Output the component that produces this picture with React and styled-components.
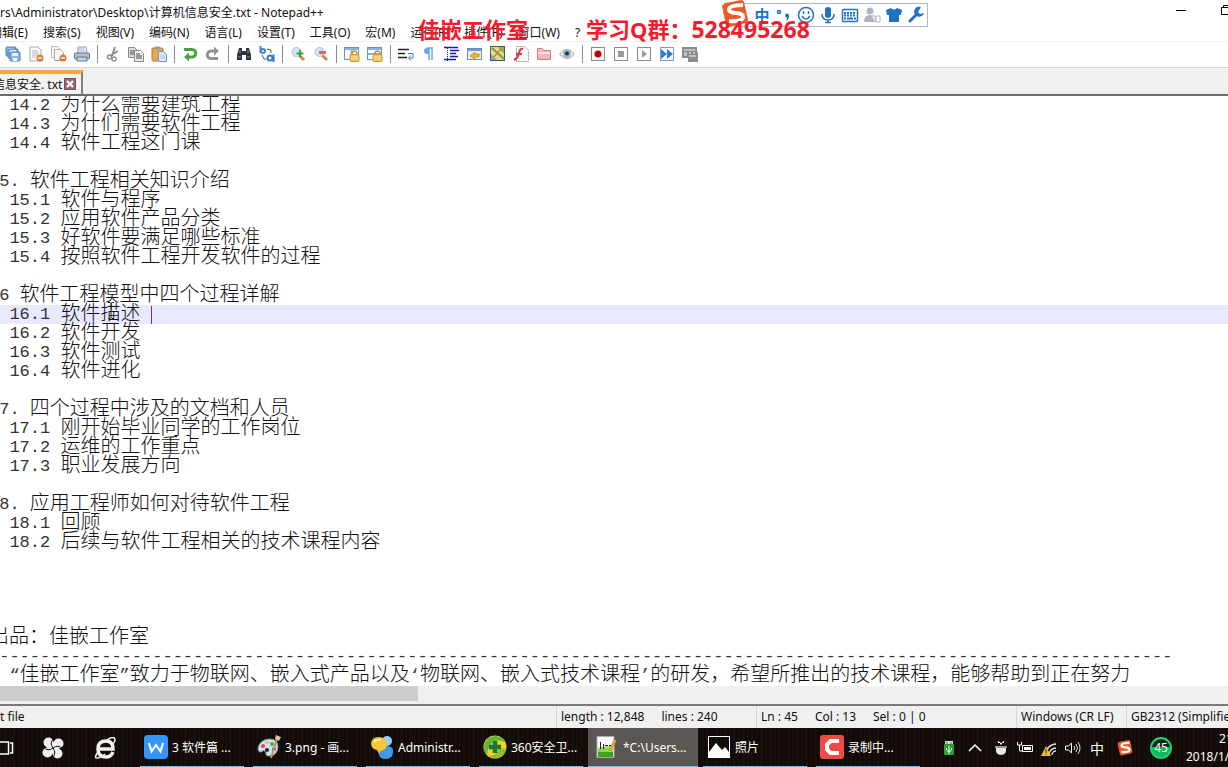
import React from "react";
import styled, { createGlobalStyle } from "styled-components";

const GlobalStyle = createGlobalStyle`
    * {
        box-sizing: border-box;
    }
    body {
        margin: 0;
        overflow: hidden;
        font-family: "Noto Sans", "Noto Sans CJK SC", sans-serif;
        font-size: 12px;
        color: #111;
    }
    button {
        font: inherit;
        color: inherit;
        background: none;
        border: 0;
        padding: 0;
        margin: 0;
    }
`

const Desktop = styled.div`
    position: relative;
    display: flex;
    flex-direction: column;
    height: 100vh;
    overflow: hidden;
    background-color: #fff;
`
const TitleBar = styled.header`
    display: flex;
    justify-content: space-between;
    align-items: center;
    height: 24px;
    white-space: nowrap;
`
const Title = styled.h1`
    margin: 0;
    font-size: 12px;
    font-weight: 400;
`
const WindowButtons = styled.div`
    display: flex;
    align-items: center;
    gap: 35px;
    overflow: hidden;
    height: 20px;
    margin-bottom: 4px;

    svg {
        display: block;
    }
`
const MenuBar = styled.nav`
    display: flex;
    align-items: center;
    gap: 15px;
    height: 18px;
    margin-left: -10px;
    border-bottom: 1px solid #f0f0f0;
    white-space: nowrap;
`
const MenuItem = styled.button`
    line-height: 16px;
`
const Toolbar = styled.div`
    display: flex;
    align-items: center;
    gap: 7px;
    height: 26px;
    padding: 0 5px 2px;
    border-bottom: 1px solid #d9d9d9;
`
const ToolButton = styled.button`
    width: 16px;
    height: 16px;

    svg {
        display: block;
    }
`
const Separator = styled.span`
    width: 1px;
    height: 18px;
    background-color: #8c8c8c;
`
const TabStrip = styled.div`
    display: flex;
    align-items: flex-end;
    height: 28px;
    background-color: #f0f0f0;
    border-bottom: 2px solid #6b6b6b;
`
const Tab = styled.div`
    display: flex;
    align-items: center;
    gap: 2px;
    height: 24px;
    margin-left: -7px;
    padding-right: 5px;
    border-top: 4px solid #f9a73e;
    border-right: 2px solid #808080;
    background-color: #f3f3f3;
    white-space: nowrap;
`
const CloseTab = styled.button`
    width: 12px;
    height: 12px;

    svg {
        display: block;
    }
`
const Editor = styled.main`
    flex: 1;
    overflow: hidden;
    font-family: "Liberation Mono", "Noto Sans CJK SC", monospace;
    font-size: 20px;
    font-weight: 300;
`
const Line = styled.div`
    display: flex;
    align-items: center;
    height: 19px;
    line-height: 19px;
    white-space: pre;
    background-color: ${(props) => (props.$current ? "#e8e8ff" : "transparent")};

    &::before {
        content: "";
        flex: none;
        margin-left: -11px;
    }
`
const Latin = styled.span`
    font-size: 17px;
    color: #333;
`
const Caret = styled.span`
    width: 1px;
    height: 18px;
    background-color: #8a1aa8;
`
const Scrollbar = styled.div`
    height: 20px;
    padding-bottom: 4px;
    background-color: #f0f0f0;
    border-bottom: 2px solid #7a7a7a;
`
const Thumb = styled.div`
    width: 34%;
    height: 15px;
    background-color: #cdcdcd;
`
const StatusBar = styled.footer`
    display: flex;
    height: 22px;
    line-height: 22px;
    background-color: #f0f0f0;
    white-space: nowrap;
`
const StatusCell = styled.div`
    display: flex;
    flex: ${(props) => (props.$width ? "none" : 1)};
    gap: 17px;
    width: ${(props) => (props.$width ? props.$width + "px" : "auto")};
    padding-left: ${(props) => (props.$width ? 4 : 0)}px;
    border-left: ${(props) => (props.$width ? "1px solid #d7d7d7" : "0")};
    overflow: hidden;
`
const Taskbar = styled.div`
    display: flex;
    height: 39px;
    color: #fff;
    background-color: #130c08;
    background-image: repeating-linear-gradient(90deg, #1b120c 0, #0f0906 3px, #1a110c 5px, #0d0705 9px);
    white-space: nowrap;
`
const Launcher = styled.button`
    display: flex;
    align-items: center;
    justify-content: ${(props) => (props.$first ? "flex-start" : "center")};
    width: ${(props) => (props.$first ? 27 : 52)}px;
`
const Tasks = styled.div`
    display: flex;
    gap: 9px;
    margin-left: 9px;
`
const Task = styled.button`
    display: flex;
    align-items: center;
    gap: 4px;
    width: ${(props) => (props.$active ? 110 : 104)}px;
    margin: ${(props) => (props.$active ? "0 -4px" : "0")};
    padding-left: ${(props) => (props.$active ? 7 : 4)}px;
    border-bottom: 1px solid #76b9ed;
    background-color: ${(props) => (props.$active ? "#5c5652" : "transparent")};
`
const Tray = styled.div`
    display: flex;
    align-items: center;
    gap: 8px;
    margin-left: auto;

    svg {
        display: block;
    }
`
const InputMode = styled.span`
    width: 16px;
    margin-right: 4px;
    font-size: 14px;
    text-align: center;
`
const Battery = styled.span`
    width: 22px;
    height: 22px;
    margin: 0 6px 0 9px;
    border: 2px solid #1fd070;
    border-radius: 50%;
    background: linear-gradient(#0d2a1a 45%, #12b85c 45%);
    line-height: 18px;
    text-align: center;
`
const Clock = styled.time`
    display: flex;
    flex-direction: column;
    width: 42px;
    line-height: 18px;
    overflow: hidden;

    span:first-child {
        padding-left: 33px;
    }
`
const InputBar = styled.div`
    position: absolute;
    top: 3px;
    left: 735px;
    display: flex;
    align-items: center;
    gap: 4px;
    width: 193px;
    height: 24px;
    padding-left: 17px;
    border: 1px solid #a9b8d0;
    background-color: #fff;
    color: #2272c3;

    svg {
        display: block;
    }
`
const InputLogo = styled.div`
    position: absolute;
    top: 0;
    left: 721px;
`
const InputText = styled.span`
    width: 18px;
    font-size: 15px;
    font-weight: 700;
    line-height: 20px;
    text-align: center;
`
const Watermark = styled.div`
    position: absolute;
    top: 15px;
    left: ${(props) => props.$left}px;
    color: #f8192c;
    font-size: 22px;
    font-weight: 700;
    line-height: 28px;
    white-space: nowrap;
`
const Digits = styled.span`
    font-size: 23px;
`
const Pointer = styled.div`
    position: absolute;
    top: 302px;
    left: 107px;
`

const Icon = ({ size = 16, children }) => (
    <svg width={size} height={size} viewBox={`0 0 ${size} ${size}`} fill="none">{children}</svg>
)

const disk = (x, y) => (
    <g key={x}>
        <rect x={x} y={y} width="10" height="9" rx="1" fill="#8fb8e6" stroke="#4a7db8" />
        <rect x={x + 2} y={y + 1} width="6" height="3" fill="#e6f0fb" />
        <rect x={x + 3} y={y + 6} width="4" height="3" fill="#fff" />
    </g>
)
const sheet = (x, y, color = "#999") => (
    <path key={x} d={`M${x} ${y}h6l3 3v8h-9z`} fill="#f8f8f8" stroke={color} />
)
const minus = <><circle cx="12" cy="12" r="3.5" fill="#e8732c" /><path d="M10 12h4" stroke="#fff" strokeWidth="1.5" /></>
const lock = (
    <>
        <path d="M8 9V7.500a2.500 2.500 0 0 1 5 0V9" stroke="#c9932f" strokeWidth="1.500" />
        <rect x="6" y="8.500" width="9" height="7" rx="1" fill="#f8c152" stroke="#d29935" />
        <path d="M7 11h7M7 13h7" stroke="#ffe3a0" />
    </>
)
const box = <rect x="1.500" y="1.500" width="13" height="13" fill="#fdfdfd" stroke="#8a8a8a" />

const tools = [
    { name: "Save all", art: <>{disk(1, 1)}{disk(3, 3)}{disk(5, 6)}</> },
    { name: "Close", art: <><path d="M2 1h8l3 3v11H2z" fill="#fafafa" stroke="#aaa" /><path d="M4 5h6M4 7h7M4 9h6M4 11h4" stroke="#bbb" />{minus}</> },
    { name: "Close all", art: <>{sheet(0.5, 0.5, "#bbb")}{sheet(3.5, 3.5, "#aaa")}{minus}</> },
    { name: "Print", art: <><path d="M4 7V1h8l1 6" fill="#eef3fa" stroke="#8a9bb5" /><rect x=".5" y="7" width="15" height="6" rx="1" fill="#b5bdc9" stroke="#69727e" /><path d="M3 11h10v4H3z" fill="#b9d5f5" stroke="#69727e" /><path d="M5 3h5M5 5h6" stroke="#9bb9e0" /></> },
    null,
    { name: "Cut", art: <><path d="M10 1L7 10M13 5L5 10" stroke="#8f8f8f" strokeWidth="2" /><circle cx="4.500" cy="11" r="2" stroke="#8f8f8f" strokeWidth="1.500" /><circle cx="9" cy="13" r="2" stroke="#8f8f8f" strokeWidth="1.500" /></> },
    { name: "Copy", art: <><path d="M.5 1.500h6l3 3v7h-9z" fill="#ddd" stroke="#888" /><path d="M2 4h4v5H2z" fill="#999" /><path d="M6.500 4.500h6l3 3v8h-9z" fill="#eee" stroke="#888" /><path d="M8 7h4v2h2v4H8z" fill="#999" /></> },
    { name: "Paste", art: <><rect x="1" y="2" width="11" height="13" rx="1" fill="#e5a84d" stroke="#b8792b" /><rect x="4" y=".5" width="5" height="3" fill="#9a9a9a" /><path d="M7.500 5.500h5l3 3v7h-8z" fill="#dce9fa" stroke="#6e92c6" /><path d="M9 10h5M9 12h5" stroke="#a9c4e8" /></> },
    null,
    { name: "Undo", art: <><path d="M2 3.500h8a3.500 3.500 0 0 1 0 7.500H5" stroke="#4ba046" strokeWidth="3" /><path d="M7 6.500v9L2 11z" fill="#4ba046" /></> },
    { name: "Redo", art: <><path d="M13 12.500H6a3.500 3.500 0 0 1 0-7.500h5" stroke="#929292" strokeWidth="3" /><path d="M9 .5v9L14 5z" fill="#929292" /></> },
    null,
    { name: "Find", art: <><path d="M3 2h3v3h4V2h3l2 7v5h-5V9H6v5H1V9z" fill="#2b3440" /><path d="M2 11h3M11 11h3M4 4v3M12 4v3" stroke="#8c9cae" /></> },
    { name: "Replace", art: <><path d="M1.500 0v7" stroke="#3f86d8" strokeWidth="2" /><circle cx="4" cy="5" r="2" stroke="#3f86d8" strokeWidth="2" /><path d="M8 3l4 1v3M3 9l2 4h2" stroke="#555" /><circle cx="11" cy="12" r="2.500" stroke="#2b78d3" strokeWidth="2" /><path d="M14.500 8.500V16" stroke="#2b78d3" strokeWidth="2" /></> },
    null,
    { name: "Zoom in", art: <><path d="M9 9l5 5" stroke="#c28b54" strokeWidth="3" /><circle cx="6.500" cy="6" r="4.500" fill="#d3e6f6" stroke="#a9c2da" /><path d="M10 4v7M6.500 7.500h7" stroke="#35a335" strokeWidth="2" /></> },
    { name: "Zoom out", art: <><path d="M9 9l5 5" stroke="#c28b54" strokeWidth="3" /><circle cx="6.500" cy="6" r="4.500" fill="#d3e6f6" stroke="#a9c2da" /><path d="M6 6.500h7" stroke="#e2606a" strokeWidth="3" /></> },
    null,
    { name: "Sync vertical", art: <><rect x=".5" y="1.500" width="14" height="12" fill="#fff" stroke="#6a94c8" /><path d="M1 3h13M7.500 3v10" stroke="#8db1de" strokeWidth="2" />{lock}</> },
    { name: "Sync horizontal", art: <><rect x=".5" y="1.500" width="14" height="12" fill="#fff" stroke="#6a94c8" /><path d="M1 3h13M1 8h13" stroke="#8db1de" strokeWidth="2" />{lock}</> },
    null,
    { name: "Word wrap", art: <><path d="M0 3.500h11M0 7.500h7M0 11.500h9" stroke="#222" strokeWidth="1.500" /><path d="M10 7.500h5v4.500h-4M13 9.500L10.500 12l2.500 2.500" stroke="#4c79ae" /></> },
    { name: "Show symbols", art: <><path d="M8 2H6a3 3 0 0 0 0 6h2z" fill="#6aa5e5" /><path d="M8 2v12M11 2v12M6 2h6" stroke="#6aa5e5" strokeWidth="1.500" /></> },
    { name: "Indent guide", art: <><path d="M0 1.500h14M6 4.500h9M6 7.500h6M6 10.500h8M0 13.500h12" stroke="#1a1ab0" strokeWidth="1.500" /><path d="M3.500 2v14" stroke="#222" strokeDasharray="1 1" /></> },
    { name: "User language", art: <><rect x=".5" y="2.500" width="14" height="11" fill="#e7f0fb" stroke="#6a8fbe" /><path d="M1 4h13" stroke="#6f9dd5" strokeWidth="2" /><path d="M3 10l5-4v2h4v3H8v2z" fill="#f0b62f" stroke="#cf9421" /></> },
    { name: "Document map", art: <><rect x=".5" y=".5" width="14" height="14" fill="#e3dc86" stroke="#555" /><path d="M8 1h6v7z" fill="#80b66b" /><path d="M1 14V8l6 6z" fill="#79a8c8" /><path d="M2 2l12 11" stroke="#6f9f5c" strokeWidth="2" /><path d="M12 2Q8 6 3 12" stroke="#d78030" strokeWidth="1.500" /></> },
    { name: "Function list", art: <><path d="M3.500.5h8l4 4v11h-12z" fill="#fbfbfb" stroke="#999" strokeDasharray="2 1" /><path d="M10 3Q7 2 6 7T1 14M3 8h6" stroke="#d33b49" strokeWidth="2" /></> },
    { name: "Folder", art: <><path d="M1.500 13.500v-11h5l1 2h7v9z" fill="#f3b5bb" stroke="#cf7f89" /><path d="M2 7h12" stroke="#fbe0e3" strokeWidth="2" /></> },
    { name: "Monitor", art: <><path d="M.5 8Q8-1 15.500 8 8 17 .5 8z" fill="#f5eee4" stroke="#bd9b77" /><circle cx="8" cy="7.500" r="4" fill="#8fb4dc" /><circle cx="8" cy="7.500" r="2" fill="#1b324f" /></> },
    null,
    { name: "Record", art: <>{box}<circle cx="8" cy="8" r="3.500" fill="#c40000" /></> },
    { name: "Stop", art: <>{box}<rect x="5" y="5" width="6" height="6" fill="#999" /></> },
    { name: "Play", art: <>{box}<path d="M6 4l5 4-5 4z" fill="#999" /></> },
    { name: "Play many", art: <><rect x="1.500" y="1.500" width="13" height="13" fill="#fff" stroke="#7ba1d0" /><path d="M2 3l6 5-6 5zM8 3l6 5-6 5z" fill="#2d7dd6" /></> },
    { name: "Save macro", art: <><path d="M0 1h15v5h1v10H6v-4H0z" fill="#8c8c8c" /><path d="M2 4h11M2 7h3M2 9h3M7 7h2M11 7h2M7 10h7" stroke="#f5f5f5" /></> },
]

const menus = ["编辑(E)", "搜索(S)", "视图(V)", "编码(N)", "语言(L)", "设置(T)", "工具(O)", "宏(M)", "运行(R)", "插件(P)", "窗口(W)", "?"]

const lines = [
    "  14.2 为什么需要建筑工程",
    "  14.3 为什们需要软件工程",
    "  14.4 软件工程这门课",
    "",
    "15. 软件工程相关知识介绍",
    "  15.1 软件与程序",
    "  15.2 应用软件产品分类",
    "  15.3 好软件要满足哪些标准",
    "  15.4 按照软件工程开发软件的过程",
    "",
    "16 软件工程模型中四个过程详解",
    "  16.1 软件描述 ",
    "  16.2 软件开发",
    "  16.3 软件测试",
    "  16.4 软件进化",
    "",
    "17. 四个过程中涉及的文档和人员",
    "  17.1 刚开始毕业同学的工作岗位",
    "  17.2 运维的工作重点",
    "  17.3 职业发展方向",
    "",
    "18. 应用工程师如何对待软件工程",
    "  18.1 回顾",
    "  18.2 后续与软件工程相关的技术课程内容",
    "",
    "",
    "",
    "",
    "出品：佳嵌工作室",
    "-".repeat(116),
    "  “佳嵌工作室”致力于物联网、嵌入式产品以及‘物联网、嵌入式技术课程’的研发，希望所推出的技术课程，能够帮助到正在努力",
]
const currentLine = 11

// half-width runs are set smaller so that two of them fill one full-width cell
const renderRuns = (text) =>
    (text.match(/[ -~‘’“”]+|[^ -~‘’“”]+/g) || []).map((run, i) =>
        /^[ -~‘’“”]/.test(run) ? <Latin key={i}>{run}</Latin> : <span key={i}>{run}</span>
    )

const SogouMark = ({ size }) => (
    <svg width={size} height={size} viewBox="0 0 28 28" fill="none">
        <path d="M3 4q0-1 2-1l15-3q2 0 3 2l4 18q0 2-2 3L8 27q-2 0-3-2L1 6z" fill="#ea5a25" />
        <path d="M22 5Q8 5 8 9.500q0 3 7 3.500t7 4q0 5-14 4" stroke="#fff" strokeWidth="4" />
    </svg>
)

const tasks = [
    {
        label: "3 软件篇 ...",
        art: <><rect width="24" height="24" rx="4" fill="#3296fa" /><path d="M5 8l2.500 8.500L12 10l4.500 6.500L19 8" stroke="#fff" strokeWidth="2" /></>,
    },
    {
        label: "3.png - 画...",
        art: <><path d="M1 14Q2 5 12 4q9 0 9 8-1 9-9 9-4 0-3-4-2-3-5 0-2 1-3-3z" fill="#cfe3f2" stroke="#7c9db8" /><circle cx="6" cy="11" r="2" fill="#de4b36" /><circle cx="10" cy="7.500" r="1.500" fill="#efb93e" /><circle cx="15" cy="9" r="2" fill="#4aa84d" /><circle cx="10" cy="15" r="2" fill="#222" /><circle cx="17" cy="14" r="2" fill="#346fc3" /><path d="M20 4l-6 19" stroke="#d78b42" strokeWidth="2" /><path d="M18 4l1-4 5 2-2 4z" fill="#dfc29a" /></>,
    },
    {
        label: "Administr...",
        art: <><circle cx="17" cy="6" r="5" fill="#8fd0fa" /><path d="M9 17q1-6 8-6t6 7q-1 6-8 6t-6-7z" fill="#3d9be9" /><path d="M1 8q1-6 8-6 8 1 8 7-1 7-7 7l-1 3-2-4Q1 14 1 8z" fill="#fbc535" /><path d="M4 7q2-3 7-2" stroke="#fff0a5" strokeWidth="2" /></>,
    },
    {
        label: "360安全卫...",
        art: <><circle cx="12" cy="12" r="11.500" fill="#f4cf25" /><path d="M1 11Q3 1 13 1q6 0 9 6-7-3-12 0T4 20Q1 17 1 11z" fill="#5fb83a" /><path d="M23 14q-2 9-11 9-4 0-7-2 9 0 12-8z" fill="#8abf32" /><path d="M12 6v12M6 12h12" stroke="#16783b" strokeWidth="4.500" /></>,
    },
    {
        label: "*C:\\Users...",
        active: true,
        art: <><path d="M2 1.500h17v21H2z" fill="#fafafa" stroke="#aaa" /><path d="M3 13q8-2 15-2v11H3z" fill="#8ad45a" /><path d="M3 17h15v5H3z" fill="#3aa51c" /><path d="M5.500 7v7M8.500 9v5M10 10.500h3M14 10.500h3" stroke="#222" /><path d="M20 5l-5 11" stroke="#e2a135" strokeWidth="3" /></>,
    },
    {
        label: "照片",
        art: <><rect x="1.500" y="1.500" width="21" height="21" stroke="#fff" /><path d="M2 17l7-9 6 7 3-3 4 5v5H2z" fill="#fff" /></>,
    },
    {
        label: "录制中...",
        art: <><rect width="24" height="24" rx="3" fill="#ee4b45" /><path d="M19 6h-8.500L7 9.500v5l3.500 3.500H19" stroke="#fff" strokeWidth="4" /></>,
    },
]

const InputMethod = () => (
    <>
        <InputBar>
            <InputText>中</InputText>
            <Icon size={18}><circle cx="4" cy="6" r="1.500" stroke="#2272c3" strokeWidth="1.500" /><path d="M10 9a2 2 0 1 1 4 1q0 4-3 5 1-2 1-3-2-1-2-3z" fill="#2272c3" /></Icon>
            <Icon size={18}><circle cx="9" cy="9" r="7.500" stroke="#2272c3" strokeWidth="1.500" /><path d="M6.500 5v3M11.500 5v3M5 10q4 6 8 0" stroke="#2272c3" strokeWidth="1.500" /></Icon>
            <Icon size={18}><rect x="6" y="1" width="6" height="11" rx="3" fill="#2272c3" /><path d="M3 8q0 6 6 6t6-6M9 14v3M6 16.500h6" stroke="#2272c3" strokeWidth="1.500" /></Icon>
            <Icon size={18}><rect x="1.500" y="3.500" width="15" height="12" rx="1" fill="#fff" stroke="#2272c3" strokeWidth="1.500" /><path d="M3 7h12M3 9.500h12" stroke="#2272c3" strokeWidth="2" strokeDasharray="2 1" /><path d="M3 12.500h2M6 12.500h6M13 12.500h2" stroke="#2272c3" strokeWidth="2" /></Icon>
            <Icon size={18}><circle cx="7" cy="5" r="3.500" fill="#abb5c3" /><path d="M1 16q0-7 6-7 4 0 5 2v5z" fill="#abb5c3" /><path d="M9 10h3v6M13 10h4v6h-4z" fill="#fff" stroke="#abb5c3" /></Icon>
            <Icon size={18}><path d="M6 2q3 3 6 0l5 2-1 5h-2v7H4V9H2L1 4z" fill="#2272c3" /></Icon>
            <Icon size={18}><path d="M3 15l7-7" stroke="#2272c3" strokeWidth="3" strokeLinecap="round" /><path d="M14 1a5 5 0 1 0 3 6l-4 1-2-2z" fill="#2272c3" /></Icon>
        </InputBar>
        <InputLogo><SogouMark size={28} /></InputLogo>
    </>
)

export default function App() {
    return (
        <Desktop>
            <GlobalStyle />
            <TitleBar>
                <Title>rs\Administrator\Desktop\计算机信息安全.txt - Notepad++</Title>
                <WindowButtons>
                    <button aria-label="Minimize"><Icon size={10}><path d="M0 5.500h10" stroke="#000" /></Icon></button>
                    <button aria-label="Restore">
                        <svg width="7" height="10" viewBox="0 0 7 10" fill="none"><path d="M7 2.500H.5v7H7M2.500 2.500v-2H7" stroke="#000" /></svg>
                    </button>
                </WindowButtons>
            </TitleBar>
            <MenuBar>
                {menus.map((label) => <MenuItem key={label}>{label}</MenuItem>)}
            </MenuBar>
            <Toolbar>
                {tools.map((tool, i) => tool
                    ? <ToolButton key={i} aria-label={tool.name}><Icon>{tool.art}</Icon></ToolButton>
                    : <Separator key={i} />
                )}
            </Toolbar>
            <TabStrip>
                <Tab>
                    信息安全. txt
                    <CloseTab aria-label="Close tab">
                        <Icon size={12}><rect x=".5" y=".5" width="11" height="11" fill="#9b6478" stroke="#7e4a5e" /><path d="M3 3l6 6M9 3l-6 6" stroke="#fff" strokeWidth="2" /></Icon>
                    </CloseTab>
                </Tab>
            </TabStrip>
            <Editor>
                {lines.map((text, i) => (
                    <Line key={i} $current={i === currentLine}>
                        {renderRuns(text)}
                        {i === currentLine && <Caret />}
                    </Line>
                ))}
            </Editor>
            <Scrollbar><Thumb /></Scrollbar>
            <StatusBar>
                <StatusCell>t file</StatusCell>
                <StatusCell $width={200}><span>length : 12,848</span><span>lines : 240</span></StatusCell>
                <StatusCell $width={260}><span>Ln : 45</span><span>Col : 13</span><span>Sel : 0 | 0</span></StatusCell>
                <StatusCell $width={110}>Windows (CR LF)</StatusCell>
                <StatusCell $width={102}>GB2312 (Simplified)</StatusCell>
            </StatusBar>
            <Taskbar>
                <Launcher $first aria-label="Task view">
                    <svg width="14" height="16" viewBox="0 0 14 16" fill="none"><path d="M0 2h8.500v12H0M10 3h2.500v10H10" stroke="#fff" strokeWidth="1.500" /></svg>
                </Launcher>
                <Launcher aria-label="Browser">
                    <Icon size={22}>
                        <circle cx="6.500" cy="5.500" r="5" fill="#f0f0f0" />
                        <circle cx="16.500" cy="6.500" r="5" fill="#f0f0f0" />
                        <circle cx="15.500" cy="16.500" r="5" fill="#f0f0f0" />
                        <circle cx="5.500" cy="15.500" r="5" fill="#f0f0f0" />
                        <circle cx="11" cy="11" r="6" fill="#f0f0f0" />
                        <path d="M11 11Q7 6 12 1M11 11q5-4 10 1M11 11q4 5-1 10M11 11q-5 4-10-1" stroke="#150e0a" />
                    </Icon>
                </Launcher>
                <Launcher aria-label="Internet Explorer">
                    <Icon size={22}>
                        <path d="M5 12h14q0-8-7-8-8 0-8 8t8 8q5 0 7-5" stroke="#f0f0f0" strokeWidth="3.500" />
                        <path d="M4 15q-5 7 0 6 4-1 7-4M13 3q8-5 8 0 0 2-2 4" stroke="#f0f0f0" strokeWidth="1.500" />
                    </Icon>
                </Launcher>
                <Tasks>
                    {tasks.map((task) => (
                        <Task key={task.label} $active={task.active}>
                            <Icon size={24}>{task.art}</Icon>
                            {task.label}
                        </Task>
                    ))}
                </Tasks>
                <Tray>
                    <Icon><path d="M4 1h8v4H4z" fill="#ddd" /><path d="M6 2v2M10 2v2" stroke="#555" /><rect x="3" y="4" width="10" height="11" rx="1" fill="#2f9e34" /><path d="M8 6v8M5.500 8v2L8 12l2.500-2V8" stroke="#fff" /></Icon>
                    <svg width="20" height="16" viewBox="0 0 20 16" fill="none"><path d="M4 11l6-6 6 6" stroke="#fff" strokeWidth="1.500" /></svg>
                    <Icon><path d="M5 2.500h2l1 2 1-2h2M5 1l1 2M11 1l-1 2" stroke="#fff" /><path d="M3 8h10q1 7-5 7T3 8z" fill="#e8e8e8" /><path d="M2 7h12" stroke="#999" strokeWidth="2" /></Icon>
                    <Icon><path d="M.5 2v3h4V2M2.500 5v6H6" stroke="#fff" /><path d="M5.500 5.500h10v6h-10z" stroke="#fff" /><path d="M7 7h7v3H7z" fill="#fff" /></Icon>
                    <Icon><path d="M5 15A10 10 0 0 1 15 4M8 15a7 7 0 0 1 7-7M11 15a4 4 0 0 1 4-4" stroke="#ddd" strokeWidth="1.500" /><path d="M5 6l5 10H0z" fill="#f8bd28" /><path d="M5 9v4M5 14v1" stroke="#222" /></Icon>
                    <Icon><path d="M.5 6h3l3-3v10l-3-3h-3z" stroke="#fff" /><path d="M9 6q1.500 2 0 4M11 4q3 4 0 8M13 2q4 6 0 12" stroke="#ddd" /></Icon>
                    <InputMode>中</InputMode>
                    <SogouMark size={16} />
                    <Battery>45</Battery>
                    <Clock><span>21:30</span><span>2018/1/10</span></Clock>
                </Tray>
            </Taskbar>
            <InputMethod />
            <Watermark $left={418}>佳嵌工作室</Watermark>
            <Watermark $left={586}>学习Q群：<Digits>528495268</Digits></Watermark>
            <Pointer>
                <svg width="8" height="17" viewBox="0 0 8 17" fill="none"><path d="M1 .5h2l1 1 1-1h2M4 1.500v14M1 16.500h2l1-1 1 1h2" stroke="#222" /></svg>
            </Pointer>
        </Desktop>
    )
}
